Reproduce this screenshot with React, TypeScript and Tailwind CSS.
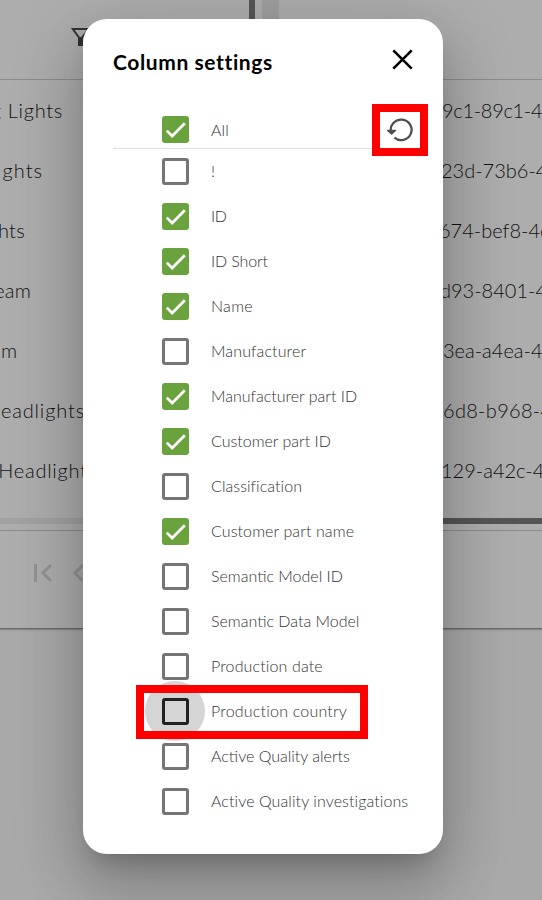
const columns = [
  { label: '!', checked: false, tracking: '' },
  { label: 'ID', checked: true, tracking: 'tracking-[-0.4px]' },
  { label: 'ID Short', checked: true, tracking: 'tracking-[-0.12px]' },
  { label: 'Name', checked: true, tracking: 'tracking-[0.3px]' },
  { label: 'Manufacturer', checked: false, tracking: 'tracking-[0.12px]' },
  { label: 'Manufacturer part ID', checked: true, tracking: '' },
  { label: 'Customer part ID', checked: true, tracking: '' },
  { label: 'Classification', checked: false, tracking: 'tracking-[0.06px]' },
  { label: 'Customer part name', checked: true, tracking: 'tracking-[0.1px]' },
  { label: 'Semantic Model ID', checked: false, tracking: '' },
  { label: 'Semantic Data Model', checked: false, tracking: '' },
  { label: 'Production date', checked: false, tracking: 'tracking-[0.14px]' },
  { label: 'Production country', checked: false, tracking: 'tracking-[0.2px]', focused: true },
  { label: 'Active Quality alerts', checked: false, tracking: '' },
  { label: 'Active Quality investigations', checked: false, tracking: 'tracking-[0.09px]' },
];

const names = [
  { text: 'g Lights', width: 'w-[63px] tracking-[0.7px]' },
  { text: 'ghts', width: 'w-[43px] tracking-[1px]' },
  { text: 'hts', width: 'w-[25px] tracking-[0.3px]' },
  { text: 'eam', width: 'w-[31px] tracking-[0.2px]' },
  { text: 'm', width: 'w-[17px]' },
  { text: 'eadlights', width: 'w-[85px] tracking-[0.85px]' },
  { text: 'Headlights', width: 'w-[97px] tracking-[0.75px]' },
];

const ids = [
  { text: '9c1-89c1-47', offset: '-ml-px tracking-[-0.3px]' },
  { text: '23d-73b6-4e', offset: '-ml-[2px]' },
  { text: '674-bef8-4e', offset: '-ml-[4px]' },
  { text: 'd93-8401-4a', offset: '-ml-[3px]' },
  { text: '3ea-a4ea-4b', offset: '' },
  { text: '6d8-b968-4', offset: 'tracking-[0.3px]' },
  { text: '129-a42c-4d', offset: '-ml-[2px]' },
];

function Checkbox({ checked, focused }: { checked: boolean; focused?: boolean }) {
  if (checked) {
    return (
      <span className="flex h-[27px] w-[27px] shrink-0 items-center justify-center rounded-[3px] bg-[#6aa23d]">
        <svg width="27" height="27" viewBox="0 0 27 27" fill="none">
          <path d="M4.7 14.6 10.2 20 22.8 7.2" stroke="#fff" strokeWidth="2.7" />
        </svg>
      </span>
    );
  }
  return (
    <span className="relative flex h-[27px] w-[27px] shrink-0">
      {focused && <span className="absolute -left-[17px] -top-[17px] h-[60px] w-[60px] rounded-full bg-[#d5d5d5]" />}
      <span className={'relative h-[27px] w-[27px] rounded-[3px] border-3 ' + (focused ? 'border-[#202020]' : 'border-[#757575]')} />
    </span>
  );
}

function Backdrop() {
  return (
    <div className="flex h-[900px] w-full flex-col bg-[#a9a9a9]">
      <div className="flex h-[628px] shrink-0 bg-[#9f9f9f]">
        <section className="flex w-[262px] shrink-0 flex-col bg-[#adadad]">
          <div className="flex h-[79px] justify-between">
            <svg className="ml-[71px] mt-[28px]" width="20" height="18" viewBox="0 0 20 18" fill="none">
              <path d="M1.8 1H18L11 9.5V17H8V9.5Z" stroke="#333" strokeWidth="2" />
              <path d="M7.2 9H11.8V18H7.2Z" fill="#333" />
            </svg>
            <div className="mr-[7px] h-[79px] w-[6px] bg-[#555]" />
          </div>
          <div className="h-px bg-[#8c8c8c]" />
          <div className="flex h-[438px] flex-col">
            {names.map((n) => (
              <div key={n.text} className="flex h-[60px] items-center">
                <div className={'flex justify-end whitespace-nowrap ' + n.width}>{n.text}</div>
              </div>
            ))}
          </div>
          <div className="h-[6px] bg-[#a1a1a1]" />
          <div className="mt-[6px] h-px bg-[#8c8c8c]" />
          <div className="flex items-center pt-8">
            <svg className="ml-[33px]" width="60" height="20" viewBox="0 0 60 20" fill="none" stroke="#939393" strokeWidth="3">
              <path d="M2.5 1V19M18 2 10 10 18 18M50 2 42 10 50 18" />
            </svg>
          </div>
        </section>
        <section className="ml-[17px] flex min-w-0 flex-1 flex-col bg-[#adadad]">
          <div className="h-[79px] shrink-0" />
          <div className="h-px shrink-0 bg-[#8c8c8c]" />
          <div className="flex h-[438px] shrink-0 flex-col pl-[164px]">
            {ids.map((id) => (
              <div key={id.text} className="flex h-[60px] items-center whitespace-nowrap">
                <span className={id.offset}>{id.text}</span>
              </div>
            ))}
          </div>
          <div className="h-[6px] shrink-0 bg-[#555]" />
          <div className="mt-[6px] h-px shrink-0 bg-[#8c8c8c]" />
        </section>
      </div>
      <div className="h-px bg-[#686868]" />
      <div className="h-px bg-[#8a8a8a]" />
      <div className="h-px bg-[#9e9e9e]" />
    </div>
  );
}

export default function App() {
  return (
    <div className="relative h-[900px] w-[542px] overflow-hidden font-['Lato',sans-serif] text-[20px] font-light text-[#111]">
      <Backdrop />
      <div className="absolute left-[83px] top-[19px] flex h-[835px] w-[360px] flex-col rounded-[24px] bg-white px-[30px] shadow-[0_16px_22px_-10px_rgba(0,0,0,0.2),0_36px_57px_5px_rgba(0,0,0,0.14),0_14px_69px_12px_rgba(0,0,0,0.12)]">
        <header className="flex h-[88px] shrink-0 items-center justify-between">
          <h2 className="-mt-[2px] text-[21px] font-bold tracking-[0.6px] text-black">Column settings</h2>
          <svg className="-mt-[7px]" width="21" height="21" viewBox="0 0 21 21" stroke="#000" strokeWidth="2.6">
            <path d="M1.3 1.3 19.7 19.7M19.7 1.3 1.3 19.7" />
          </svg>
        </header>
        <div className="flex h-[42px] shrink-0 items-center border-b border-[#dfdfdf] pl-[49px] pt-[4px]">
          <Checkbox checked />
          <span className="ml-[22px] text-[16px] tracking-[0.1px] text-[#333]">All</span>
          <svg className="-mr-px ml-auto" width="28" height="26" viewBox="0 0 28 26" fill="none" stroke="#505050">
            <path d="M5 15A10.4 10.2 0 1 1 8.4 20.6" strokeWidth="2.3" />
            <path d="M1.7 13.4 5.6 17 9.5 13.4Z" fill="#505050" strokeWidth="1.5" strokeLinejoin="round" />
          </svg>
        </div>
        <div className="flex flex-col">
          {columns.map((c) => (
            <label key={c.label} className="flex h-[45px] items-center whitespace-nowrap pl-[49px] text-[16px] text-[#333]">
              <Checkbox checked={c.checked} focused={c.focused} />
              <span className={'-mt-[2px] ml-[22px] ' + c.tracking}>{c.label}</span>
            </label>
          ))}
        </div>
      </div>
      <div className="absolute left-[372px] top-[104px] h-[52px] w-[56px] border-8 border-[#ff0000]" />
      <div className="absolute left-[136px] top-[685px] h-[54px] w-[232px] border-8 border-[#ff0000]" />
    </div>
  );
}
